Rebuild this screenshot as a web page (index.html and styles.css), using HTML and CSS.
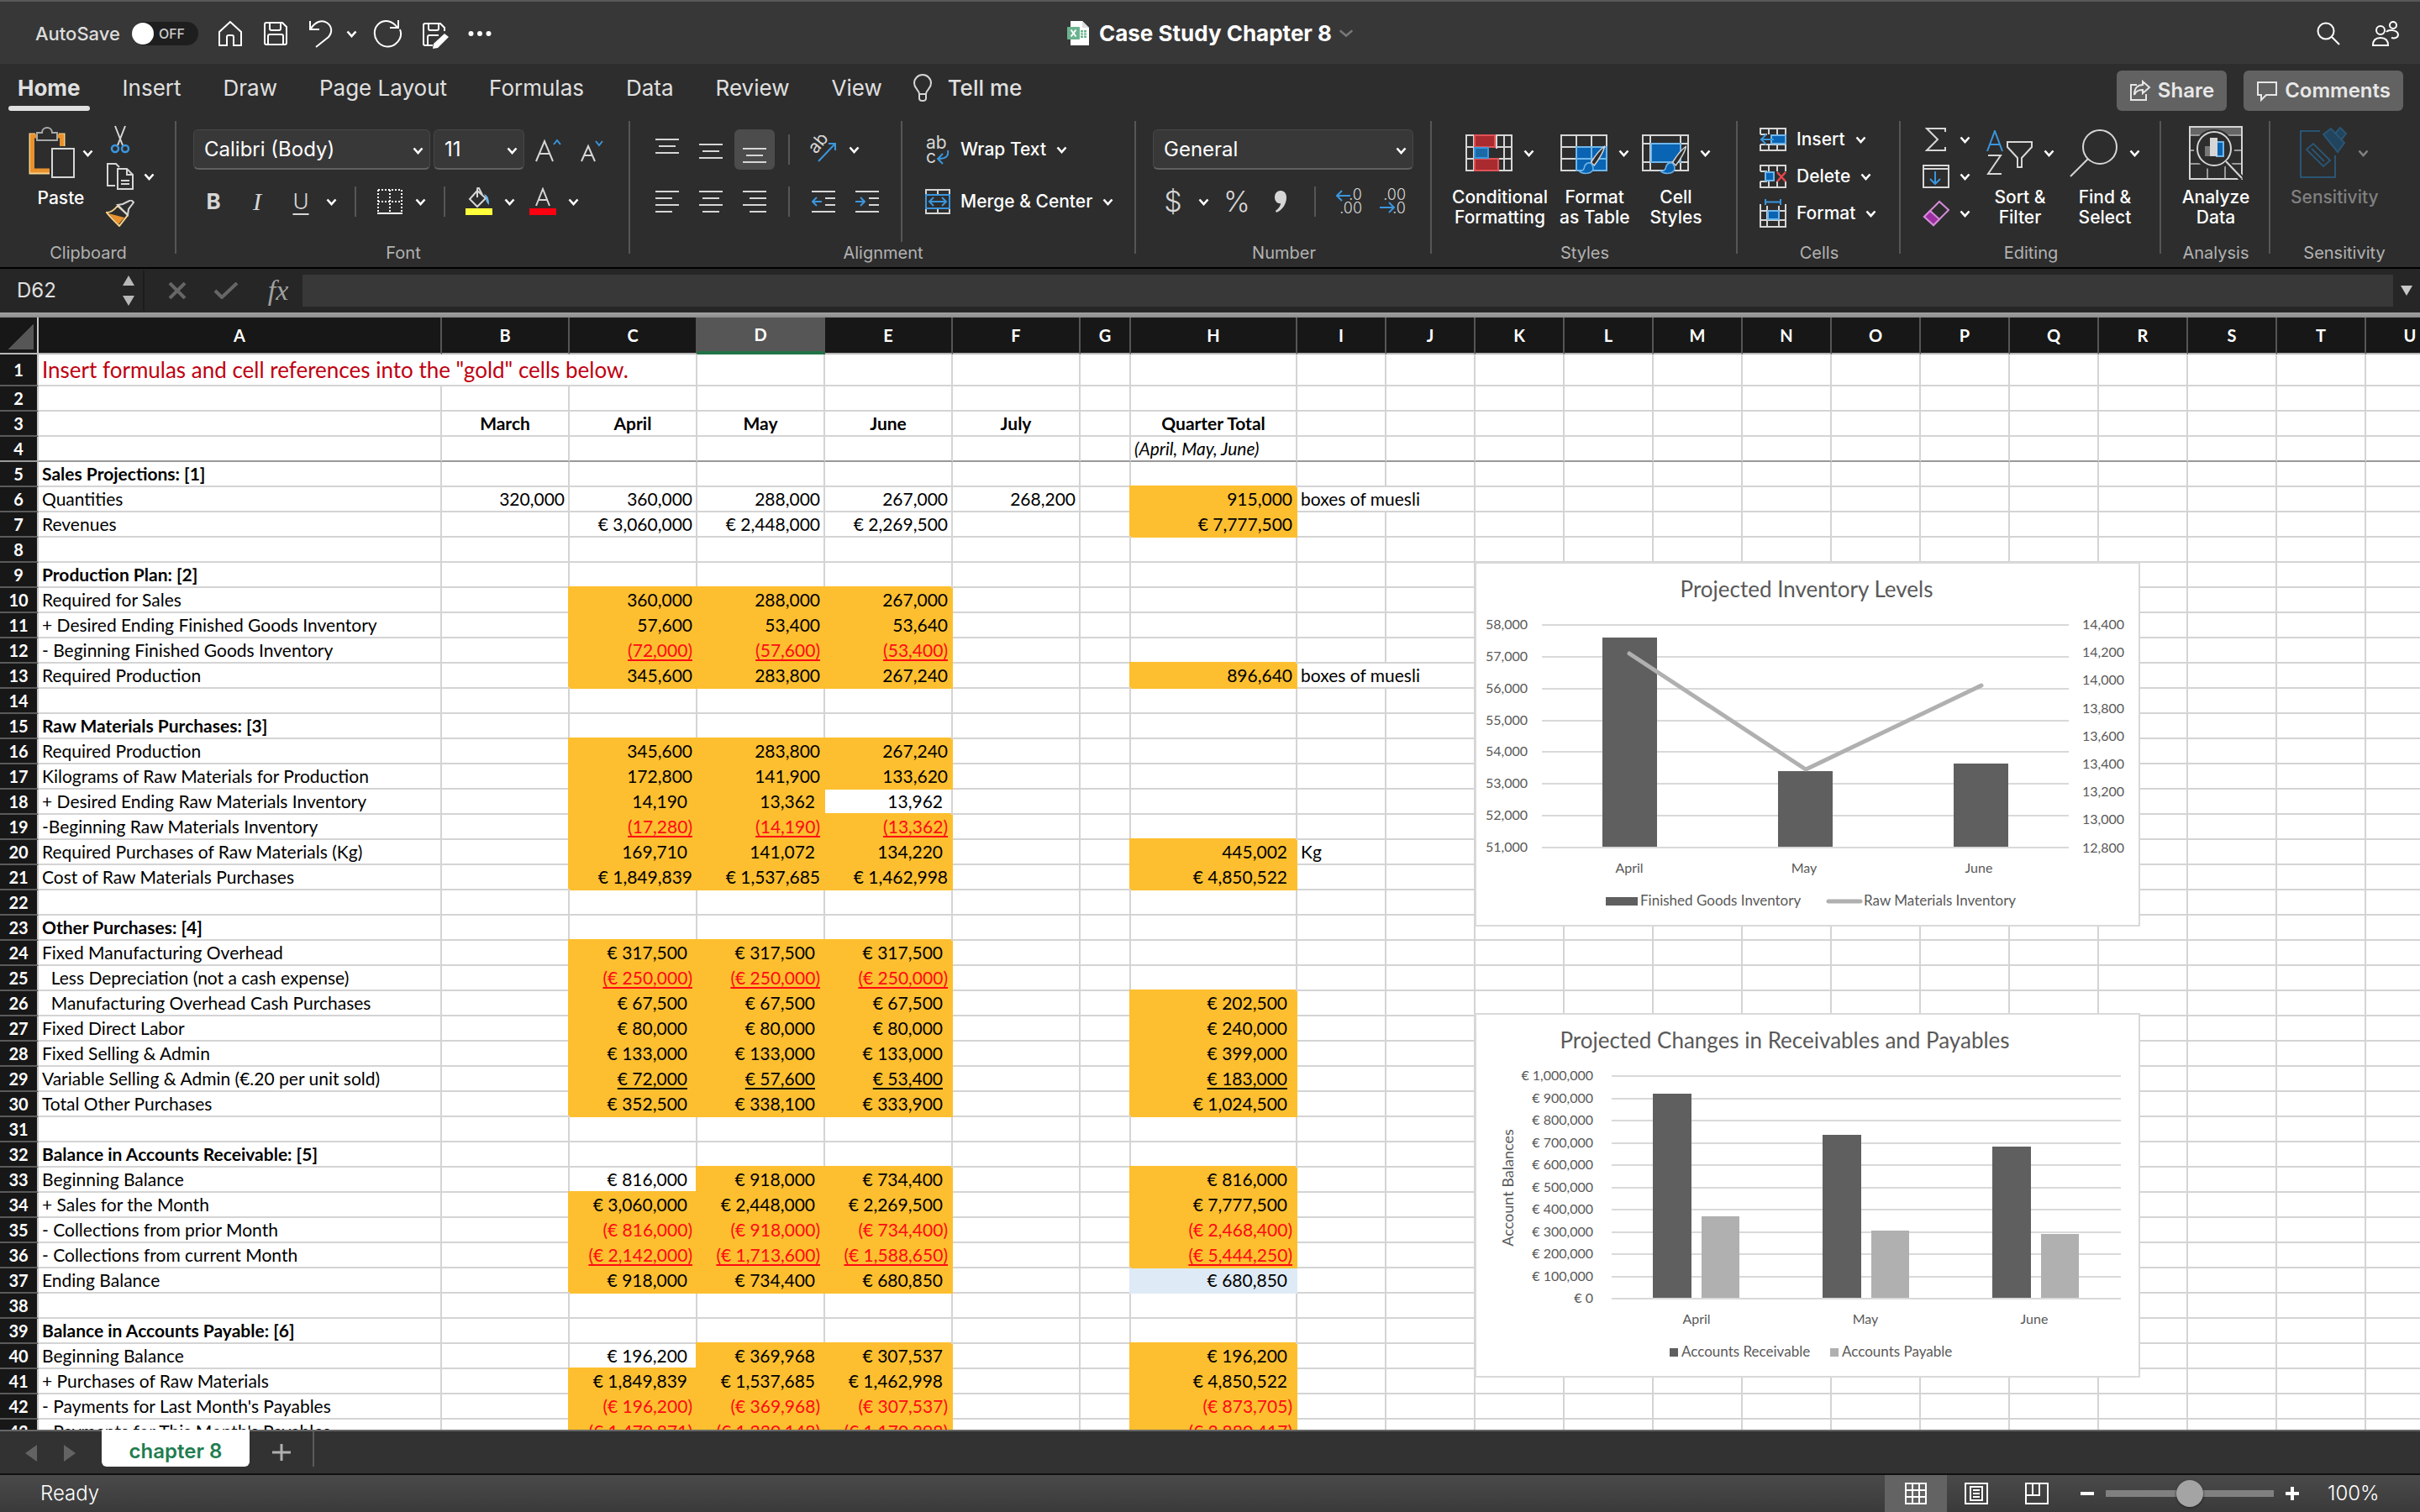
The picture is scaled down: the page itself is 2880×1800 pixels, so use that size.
FILE: index.html
```html
<!DOCTYPE html>
<html lang="en">
<head>
<meta charset="utf-8">
<title>Case Study Chapter 8</title>
<link rel="stylesheet" href="styles.css">
</head>
<body>
<svg class="defs" aria-hidden="true">
  <symbol id="chev" viewBox="0 0 13 9"><path d="M1.5 1.5 6.5 7 11.5 1.5" fill="none" stroke="currentColor" stroke-width="2.6"/></symbol>
  <symbol id="brush" viewBox="0 0 44 56"><path d="M41 2c-6 4-16 17-21 25l5 5C31 25 41 8 41 2z" fill="#2d2d2d" stroke="#d6d6d6" stroke-width="2"/><path d="M19 28c-6-1-9 3-10 8-1 4-4 5-8 5 5 5 19 5 22-2 1-4-1-9-4-11z" fill="#0a64b4" stroke="#6fb6ea" stroke-width="2"/></symbol>
</svg>

<header class="titlebar">
  <div class="quick">
    <label class="autosave">AutoSave <span class="switch"><input type="checkbox" role="switch"><span>OFF</span></span></label>
    <button class="q" aria-label="Home"><svg width="32" height="34" viewBox="0 0 32 34"><path d="M16 3 3 15v16h9V21q0-2 2-2h4q2 0 2 2v10h9V15z" class="w"/></svg></button>
    <button class="q" aria-label="Save"><svg width="32" height="34" viewBox="0 0 32 34"><path d="M5 4h19l5 5v19q0 2-2 2H5q-2 0-2-2V6q0-2 2-2zM9 4v7q0 2 2 2h9q2 0 2-2V4M7 30V20q0-2 2-2h14q2 0 2 2v10" class="w"/></svg></button>
    <button class="q undo" aria-label="Undo"><svg width="32" height="36" viewBox="0 0 32 36"><path d="M3 3v10h11M4 12C9 4 17 1 23 5s7 11 2 17L10 34" class="w"/></svg></button>
    <button class="qc" aria-label="Undo list"><svg class="chev"><use href="#chev"/></svg></button>
    <button class="q" aria-label="Redo"><svg width="36" height="36" viewBox="0 0 36 36"><path d="M31 2v9H21M30 11C24 2 14 1 8 6S1 20 6 27s15 9 22 3 7-12 5-17" class="w"/></svg></button>
    <button class="q edit" aria-label="Save as"><svg width="34" height="36" viewBox="0 0 34 36"><path d="M14 32H5q-2 0-2-2V8q0-2 2-2h18l5 5v4M9 6v6q0 2 2 2h8q2 0 2-2V6M8 31V22q0-2 2-2h11" class="w"/><path d="M28 18l5 4-13 13-6 1 1-6z" fill="#fff"/></svg></button>
    <button class="q" aria-label="More"><svg width="28" height="8" viewBox="0 0 28 8"><g fill="#fff"><circle cx="3.500" cy="4" r="3"/><circle cx="14" cy="4" r="3"/><circle cx="24.500" cy="4" r="3"/></g></svg></button>
  </div>
  <h1 class="doc"><svg width="27" height="30" viewBox="0 0 27 30"><path d="M4 0h14l8 8v21H4z" fill="#fff"/><path d="M18 0v8h8z" fill="#ddd"/><path d="M16 11h7v9h-7z" fill="#6bb38f"/><path d="M19.500 11v9M16 14h7M16 17h7" stroke="#fff"/><rect y="7" width="15" height="15" rx="1" fill="#6bb38f"/><path d="M4.500 10.500l6 8M10.500 10.500l-6 8" stroke="#fff" stroke-width="2"/></svg>
    Case Study Chapter 8 <svg class="dim" width="16" height="10" viewBox="0 0 16 10"><path d="M1.500 2 8 7.500 14.500 2" fill="none" stroke="#777" stroke-width="2.600" stroke-linecap="round"/></svg></h1>
  <div class="tools">
    <button aria-label="Search"><svg width="30" height="30" viewBox="0 0 30 30"><circle cx="12" cy="12" r="9.500" class="w"/><path d="M19 19l9 9" class="w"/></svg></button>
    <button aria-label="Sharing"><svg width="34" height="34" viewBox="0 0 34 34"><circle cx="11" cy="13" r="5" class="w"/><path d="M2 31c0-6 3-9 9-9s9 3 9 9z" class="w"/><circle cx="26" cy="7" r="4" class="w"/><path d="M18 15c2-3 13-3 14 3 0 4-4 5-8 4" class="w"/></svg></button>
  </div>
</header>

<nav class="tabs">
  <a href="#home" class="on">Home</a><a href="#insert">Insert</a><a href="#draw">Draw</a><a href="#layout">Page Layout</a><a href="#formulas">Formulas</a><a href="#data">Data</a><a href="#review">Review</a><a href="#view">View</a>
  <a href="#tell" class="tell"><svg width="24" height="34" viewBox="0 0 24 34"><path d="M8 24c0-5-6-6-6-13a10 10 0 0 1 20 0c0 7-6 8-6 13zM8 24v5q0 3 4 3t4-3v-5" fill="none" stroke="#d6d6d6" stroke-width="2"/></svg>Tell me</a>
  <div class="actions">
    <button><svg width="26" height="26" viewBox="0 0 26 26"><path d="M9 6H2v18h18v-7M16 2l8 7-8 7v-4c-5 0-8 1-10 6 0-8 4-12 10-12z" fill="none" stroke="#e6e6e6" stroke-width="2"/></svg>Share</button>
    <button><svg width="26" height="26" viewBox="0 0 26 26"><path d="M2 3h22v15H12l-6 6v-6H2z" fill="none" stroke="#e6e6e6" stroke-width="2"/></svg>Comments</button>
  </div>
</nav>

<section class="ribbon">
  <div class="group g-clip"><div class="body">
    <button class="big"><span class="ic"><svg width="56" height="62" viewBox="0 0 56 62"><path d="M8 9H2v46h23M36 9h6v14" fill="none" stroke="#f6d28c" stroke-width="3"/><path d="M9 11H4.500v41H25M35 11h4.500v12" fill="none" stroke="#e8912d" stroke-width="5"/><path d="M10 7h6c0-8 12-8 12 0h6v9H10z" fill="#2d2d2d" stroke="#a8a8a8" stroke-width="2"/><path d="M28 26h26v34H28z" fill="#2d2d2d" stroke="#d6d6d6" stroke-width="2"/></svg><svg class="chev"><use href="#chev"/></svg></span><span>Paste</span></button>
    <div class="stack">
      <button aria-label="Cut"><span class="i32"><svg width="24" height="34" viewBox="0 0 24 34"><path d="M6 1l9 23M18 1L9 24" stroke="#d6d6d6" stroke-width="2"/><circle cx="6" cy="28" r="4" fill="none" stroke="#3a96dd" stroke-width="2.500"/><circle cx="18" cy="28" r="4" fill="none" stroke="#3a96dd" stroke-width="2.500"/></svg></span></button>
      <button aria-label="Copy"><span class="i32"><svg width="34" height="34" viewBox="0 0 34 34"><path d="M11 28H2V2h10l4 4M14 8h11l7 7v17H14zM25 8v7h7M18 22h10M18 26h10" class="g"/></svg></span><svg class="chev"><use href="#chev"/></svg></button>
      <button aria-label="Format painter"><span class="i32"><svg width="34" height="32" viewBox="0 0 34 32"><path d="M14 7l12 11-10 13C9 24 4 19 1 15c5 0 9-3 13-8z" fill="#2d2d2d" stroke="#f6d28c" stroke-width="2"/><path d="M3 16l19 5-7 8z" fill="#e8912d"/><path d="M14 6l6-1 10-5 3 3-6 8-1 7z" fill="#2d2d2d" stroke="#d6d6d6" stroke-width="2"/></svg></span></button>
    </div></div><p>Clipboard</p></div>

  <div class="group g-font"><div class="body rows">
    <div class="row"><span class="combo face"><select aria-label="Font"><option>Calibri (Body)</option></select><svg class="chev"><use href="#chev"/></svg></span><span class="combo size"><select aria-label="Font size"><option>11</option></select><svg class="chev"><use href="#chev"/></svg></span>
      <button class="b" aria-label="Grow font"><svg width="32" height="30" viewBox="0 0 32 30"><path d="M2 29 12 5l10 24M6 20h12" class="g"/><path d="M23 9l4-5 4 5" class="bl"/></svg></button>
      <button class="b" aria-label="Shrink font"><svg width="28" height="30" viewBox="0 0 28 30"><path d="M2 29 10 11l8 18M5 22h10" class="g"/><path d="M19 5l4 5 4-5" class="bl"/></svg></button></div>
    <div class="row"><button class="b bold">B</button><button class="b ital">I</button><span class="pair"><button class="b und">U</button><button class="c" aria-label="Underline styles"><svg class="chev"><use href="#chev"/></svg></button></span><i class="sep"></i>
      <span class="pair"><button class="b" aria-label="Borders"><svg width="30" height="30" viewBox="0 0 30 30"><path d="M1 1h28M1 1v26M29 1v26M15 1v26M1 15h28" fill="none" stroke="#fff" stroke-width="2" stroke-dasharray="2 2"/><path d="M0 29h30" stroke="#fff" stroke-width="2"/></svg></button><button class="c" aria-label="Border styles"><svg class="chev"><use href="#chev"/></svg></button></span><i class="sep"></i>
      <span class="pair"><button class="b" aria-label="Fill colour"><svg width="32" height="34" viewBox="0 0 32 34"><path d="M14 4 5 14l9 9 10-10zM14 12V2q0-2 2-1l4 8" class="g"/><path d="M22 8q6 1 6 13-4-3-4-9z" fill="#6fb6ea"/><path d="M0 25h32v8H0z" fill="#ffff3c"/></svg></button><button class="c" aria-label="Fill colours"><svg class="chev"><use href="#chev"/></svg></button></span>
      <span class="pair"><button class="b" aria-label="Font colour"><svg width="32" height="34" viewBox="0 0 32 34"><path d="M8 22 16 2l8 20M11 15h10" class="g"/><path d="M0 25h32v8H0z" fill="#fe0010"/></svg></button><button class="c" aria-label="Font colours"><svg class="chev"><use href="#chev"/></svg></button></span></div>
  </div><p>Font</p></div>

  <div class="group g-align"><div class="body"><div class="rows">
    <div class="row"><button class="b" aria-label="Top align"><svg width="28" height="30" viewBox="0 0 28 30"><path d="M0 3h28M4 11h20M0 19h28" class="g"/></svg></button><button class="b" aria-label="Middle align"><svg width="28" height="30" viewBox="0 0 28 30"><path d="M0 9h28M4 17h20M0 25h28" class="g"/></svg></button><button class="b pressed" aria-label="Bottom align"><svg width="28" height="32" viewBox="0 0 28 32"><path d="M0 15h28M4 23h20M0 31h28" class="g"/></svg></button><i class="sep"></i>
      <span class="pair"><button class="b" aria-label="Orientation"><svg width="34" height="34" viewBox="0 0 34 34"><text x="0" y="0" transform="translate(8 23) rotate(-50)" class="ab">ab</text><path d="M11 31 30 11M23 10h8v8" class="bl"/></svg></button><button class="c" aria-label="Orientations"><svg class="chev"><use href="#chev"/></svg></button></span></div>
    <div class="row"><button class="b" aria-label="Align left"><svg width="28" height="28" viewBox="0 0 28 28"><path d="M0 2h28M0 10h20M0 18h28M0 26h20" class="g"/></svg></button><button class="b" aria-label="Centre"><svg width="28" height="28" viewBox="0 0 28 28"><path d="M0 2h28M4 10h20M0 18h28M4 26h20" class="g"/></svg></button><button class="b" aria-label="Align right"><svg width="28" height="28" viewBox="0 0 28 28"><path d="M0 2h28M8 10h20M0 18h28M8 26h20" class="g"/></svg></button><i class="sep"></i>
      <button class="b" aria-label="Decrease indent"><svg width="28" height="28" viewBox="0 0 28 28"><path d="M0 2h28M16 10h12M16 18h12M0 26h28" class="g"/><path d="M12 14H1M6 9l-5 5 5 5" class="bl"/></svg></button><button class="b" aria-label="Increase indent"><svg width="28" height="28" viewBox="0 0 28 28"><path d="M0 2h28M16 10h12M16 18h12M0 26h28" class="g"/><path d="M0 14h11M6 9l5 5-5 5" class="bl"/></svg></button></div></div>
    <i class="divider"></i>
    <div class="rows">
      <button class="wide"><span class="i48"><svg width="30" height="36" viewBox="0 0 30 36"><text x="1" y="17" class="ab">ab</text><text x="1" y="34" class="ab">c</text><path d="M27 19q2 10-11 10M21 23l-6 6 6 6" class="bl"/></svg></span>Wrap Text<svg class="chev"><use href="#chev"/></svg></button>
      <button class="wide"><span class="i48"><svg width="30" height="30" viewBox="0 0 30 30"><path d="M1 6V1h28v5M1 24v5h28v-5M15 1v5M15 24v5" class="g"/><path d="M1 7h28v16H1zM5 15h20M10 10l-5 5 5 5M20 10l5 5-5 5" class="bl"/></svg></span>Merge &amp; Center<svg class="chev"><use href="#chev"/></svg></button>
    </div></div><p>Alignment</p></div>

  <div class="group g-num"><div class="body rows">
    <div class="row"><span class="combo fmt"><select aria-label="Number format"><option>General</option></select><svg class="chev"><use href="#chev"/></svg></span></div>
    <div class="row"><span class="pair"><button class="b glyph">$</button><button class="c" aria-label="Currencies"><svg class="chev"><use href="#chev"/></svg></button></span><button class="b glyph">%</button><button class="b" aria-label="Comma style"><svg width="16" height="28" viewBox="0 0 16 28"><path d="M8 1c5 0 7 4 7 8 0 8-5 15-12 18l-1-2c4-3 6-6 6-9-4 1-7-3-7-7 0-5 3-8 7-8z" fill="#d6d6d6"/></svg></button><i class="sep"></i>
      <button class="b" aria-label="Increase decimal"><svg width="32" height="34" viewBox="0 0 32 34"><text x="31" y="15" text-anchor="end" class="dec">.0</text><text x="31" y="31" text-anchor="end" class="dec">.00</text><path d="M17 10H1M7 4l-6 6 6 6" class="bl"/></svg></button><button class="b" aria-label="Decrease decimal"><svg width="32" height="34" viewBox="0 0 32 34"><text x="31" y="15" text-anchor="end" class="dec">.00</text><text x="31" y="31" text-anchor="end" class="dec">.0</text><path d="M0 24h17M11 18l6 6-6 6" class="bl"/></svg></button></div>
  </div><p>Number</p></div>

  <div class="group g-style"><div class="body">
    <button class="big"><span class="ic"><svg width="56" height="44" viewBox="0 0 56 44"><path d="M1 1h54v42H1zM1 15h54M1 29h54M10 1v42M46 1v42M37 1v42" class="g"/><path d="M11 1h24v14H11zM11 29h28v14H11z" fill="#a92b2f" stroke="#e05357" stroke-width="2"/><path d="M11 16h16v12H11z" fill="#1b6aa8" stroke="#3a96dd" stroke-width="2"/><path d="M28 17h17v11H28z" fill="#2d2d2d"/></svg><svg class="chev"><use href="#chev"/></svg></span><span>Conditional<br>Formatting</span></button>
    <button class="big"><span class="ic"><svg width="56" height="44" viewBox="0 0 56 44" overflow="visible"><path d="M1 1h54v42H1zM1 15h54M1 29h54M19 1v42M37 1v42" class="g"/><path d="M19 15h36v28H19z" fill="#0a64b4" stroke="#6fb6ea" stroke-width="2"/><path d="M37 15v28M19 29h36" stroke="#6fb6ea" stroke-width="2"/><use href="#brush" x="15" y="13" width="46" height="42"/></svg><svg class="chev"><use href="#chev"/></svg></span><span>Format<br>as Table</span></button>
    <button class="big"><span class="ic"><svg width="56" height="44" viewBox="0 0 56 44" overflow="visible"><path d="M1 1h54v42H1zM1 11h54M1 33h54M10 1v42M46 1v42" class="g"/><path d="M11 11h35v22H11z" fill="#0a64b4" stroke="#6fb6ea" stroke-width="2"/><use href="#brush" x="15" y="13" width="46" height="42"/></svg><svg class="chev"><use href="#chev"/></svg></span><span>Cell<br>Styles</span></button>
  </div><p>Styles</p></div>

  <div class="group g-cells"><div class="body"><div class="stack">
    <button><span class="i32"><svg width="32" height="28" viewBox="0 0 32 28"><path d="M1 8V1h30v26H1v-7M11 1v7M21 1v26M11 20v7M1 8h8M1 20h30" class="g"/><path d="M14 9h17v10H14z" fill="#0a64b4" stroke="#6fb6ea" stroke-width="2"/><path d="M17 14H1M8 8l-6 6 6 6" class="bl"/></svg></span>Insert<svg class="chev"><use href="#chev"/></svg></button>
    <button><span class="i32"><svg width="32" height="28" viewBox="0 0 32 28"><path d="M1 8V1h30v7M1 20v7h30v-7M11 1v7M21 1v7M11 20v7M21 20v7M1 8h8M1 20h8" class="g"/><path d="M7 9h10v10H7z" fill="#0a64b4" stroke="#6fb6ea" stroke-width="2"/><path d="M21 9l10 11M31 9 21 20" stroke="#e8474c" stroke-width="2.500"/></svg></span>Delete<svg class="chev"><use href="#chev"/></svg></button>
    <button><span class="i32"><svg width="32" height="34" viewBox="0 0 32 34"><path d="M1 6v27h30V6M1 14h30M1 25h30M9 8v25M23 8v25" class="g"/><path d="M10 14h13v10H10z" fill="#0a64b4" stroke="#6fb6ea" stroke-width="2"/><path d="M7 0v7M25 0v7M7 3.500h18" class="bl"/></svg></span>Format<svg class="chev"><use href="#chev"/></svg></button>
  </div></div><p>Cells</p></div>

  <div class="group g-edit"><div class="body">
    <div class="stack">
      <button aria-label="AutoSum"><span class="i32"><svg width="26" height="28" viewBox="0 0 26 28"><path d="M24 5V1H2l13 13L2 27h22v-4" class="g"/></svg></span><svg class="chev"><use href="#chev"/></svg></button>
      <button aria-label="Fill"><span class="i32"><svg width="32" height="28" viewBox="0 0 32 28"><path d="M1 1h30v26H1zM1 5h30" class="g"/><path d="M15 8v15M9 17l6 6 6-6" class="bl"/></svg></span><svg class="chev"><use href="#chev"/></svg></button>
      <button aria-label="Clear"><span class="i32"><svg width="32" height="32" viewBox="0 0 32 32"><path d="M2 20 20 2l11 10-18 18z" fill="none" stroke="#d58ad8" stroke-width="2"/><path d="M2 20l7-7 11 10-7 7z" fill="#9b2fa0" stroke="#d58ad8" stroke-width="2"/></svg></span><svg class="chev"><use href="#chev"/></svg></button>
    </div>
    <button class="big"><span class="ic"><svg width="56" height="54" viewBox="0 0 56 54"><path d="M2 25 11 1l9 24M5 17h12" class="bl"/><path d="M3 30h15L3 52h16" class="g"/><path d="M26 14h29v6L43 33v11h-5V33L26 20z" class="g"/></svg><svg class="chev"><use href="#chev"/></svg></span><span>Sort &amp;<br>Filter</span></button>
    <button class="big"><span class="ic"><svg width="58" height="60" viewBox="0 0 58 60"><circle cx="36" cy="23" r="20" class="g"/><path d="M22 37 1 58" class="g"/></svg><svg class="chev"><use href="#chev"/></svg></span><span>Find &amp;<br>Select</span></button>
  </div><p>Editing</p></div>

  <div class="group g-anal"><div class="body">
    <button class="big"><span class="ic"><svg width="64" height="64" viewBox="0 0 64 64"><path d="M1 1h62v10H1z" fill="#666"/><path d="M1 29h62M1 45h62M22 45v18M43 45v18M1 11h62" fill="none" stroke="#999" stroke-width="2"/><path d="M1 1h62v62H1z" class="g"/><circle cx="30" cy="28" r="24" fill="#2d2d2d"/><path d="M19 24h8v12h-8z" fill="#777"/><path d="M33 19h8v17h-8z" fill="#0a64b4" stroke="#6fb6ea" stroke-width="2"/><path d="M25 14h9v22h-9z" fill="#d6d6d6"/><circle cx="30" cy="27" r="20" class="g"/><path d="M44 42l19 21" stroke="#2d2d2d" stroke-width="7"/><path d="M44 42l19 20" class="g"/></svg></span><span>Analyze<br>Data</span></button>
  </div><p>Analysis</p></div>

  <div class="group g-sens"><div class="body">
    <button class="big" disabled><span class="ic"><svg width="56" height="62" viewBox="0 0 56 62"><g fill="none" stroke="#2b5573" stroke-width="2"><path d="M24 5H1v55h41V34"/><path d="M8 27l8-7 20 20-8 7zM14 26l15 15"/><path d="M42 8l6-7 7 7-6 8M28 9l9-7 16 17-8 11z" fill="#22455f"/></g></svg><svg class="chev"><use href="#chev"/></svg></span><span>Sensitivity</span></button>
  </div><p>Sensitivity</p></div>
</section>

<div class="formula">
  <div class="name"><input aria-label="Name box" value="D62"><span class="step"><svg width="14" height="36" viewBox="0 0 14 36"><path d="M7 0l7 12H0zM7 36l7-12H0z" fill="#b8b8b8"/></svg></span></div>
  <button class="x" aria-label="Cancel"><svg width="22" height="20" viewBox="0 0 22 20"><path d="M2 1l18 18M20 1 2 19" stroke="#666" stroke-width="4"/></svg></button>
  <button class="ok" aria-label="Enter"><svg width="30" height="20" viewBox="0 0 30 20"><path d="M2 10l8 8L28 1" fill="none" stroke="#666" stroke-width="4"/></svg></button>
  <button class="fx" aria-label="Insert function">fx</button>
  <input class="entry" aria-label="Formula">
  <button class="drop" aria-label="Expand"><svg width="14" height="12" viewBox="0 0 14 12"><path d="M0 0h14L7 12z" fill="#c8c8c8"/></svg></button>
</div>

<main class="sheet">
  <table id="grid"></table>
  <figure class="chart inventory">
    <svg viewBox="0 0 792 434" role="img" aria-label="Projected Inventory Levels" id="inv"></svg>
  </figure>
  <figure class="chart balances">
    <svg viewBox="0 0 792 434" role="img" aria-label="Projected Changes in Receivables and Payables" id="bal"></svg>
  </figure>
</main>

<div class="sheets">
  <button aria-label="Previous sheet"><svg width="14" height="20" viewBox="0 0 14 20"><path d="M14 0v20L0 10z" fill="#636363"/></svg></button>
  <button aria-label="Next sheet"><svg width="14" height="20" viewBox="0 0 14 20"><path d="M0 0v20l14-10z" fill="#636363"/></svg></button>
  <a class="tab" href="#chapter8">chapter 8</a>
  <button class="add" aria-label="New sheet"><svg width="22" height="20" viewBox="0 0 22 20"><path d="M11 0v20M0 10h22" stroke="#b0b0b0" stroke-width="3"/></svg></button>
</div>

<footer class="status">
  <span class="ready">Ready</span>
  <button class="view on" aria-label="Normal view"><svg width="26" height="26" viewBox="0 0 26 26"><path d="M1 1h24v24H1zM9 1v24M17 1v24M1 9h24M1 17h24" class="w"/></svg></button>
  <button class="view" aria-label="Page layout"><svg width="28" height="26" viewBox="0 0 28 26"><path d="M1 1h26v24H1zM7 5h14v16H7zM10 9h8M10 13h8M10 17h8" class="w"/></svg></button>
  <button class="view" aria-label="Page break"><svg width="28" height="26" viewBox="0 0 28 26"><path d="M1 1h26v24H1zM9 1v14M17 1v14H1" class="w"/></svg></button>
  <button class="zm" aria-label="Zoom out"><svg width="16" height="16" viewBox="0 0 16 16"><path d="M0 8h16" stroke="#fff" stroke-width="4"/></svg></button>
  <input type="range" min="0" max="100" value="50" aria-label="Zoom">
  <button class="zm" aria-label="Zoom in"><svg width="16" height="16" viewBox="0 0 16 16"><path d="M0 8h16M8 0v16" stroke="#fff" stroke-width="4"/></svg></button>
  <span class="pct">100%</span>
</footer>
<script src="grid.js"></script>
</body>
</html>
```
FILE: styles.css
```css
* { box-sizing: border-box; }
html, body { height: 100%; }
body { margin: 0; display: flex; flex-direction: column; overflow: hidden; background: #2d2d2d; color: #fff; font: 22px/24px Inter, "Liberation Sans", sans-serif; }
button { appearance: none; border: 0; padding: 0; margin: 0; background: none; color: inherit; font: inherit; display: flex; align-items: center; justify-content: center; white-space: nowrap; }
a { color: inherit; text-decoration: none; }
p { margin: 0; }
svg { display: block; flex: none; }
.defs { position: absolute; width: 0; height: 0; }
.chev { width: 13px; height: 9px; }
.w { fill: none; stroke: #fff; stroke-width: 2; }
.g { fill: none; stroke: #d6d6d6; stroke-width: 2; }
.bl { fill: none; stroke: #3a96dd; stroke-width: 2; }

/* title bar */
.titlebar { flex: none; height: 76px; display: grid; grid-template-columns: 1fr auto 1fr; align-items: center; background: #373737; border-top: 2px solid #595959; padding: 2px 42px 0; }
.quick { display: flex; align-items: center; gap: 22px; }
.autosave { display: flex; align-items: center; gap: 14px; color: #ddd; font-size: 22px; font-weight: 500; }
.switch { display: flex; align-items: center; width: 79px; height: 28px; border-radius: 14px; background: #1e1e1e; }
.switch input { appearance: none; margin: 0 6px 0 0; width: 26px; height: 26px; border-radius: 13px; background: #fff; }
.switch span { font-size: 16px; color: #ccc; }
.undo { margin-right: -8px; }
.qc { margin-right: -4px; }
.doc { margin: 0; display: flex; align-items: center; gap: 11px; font-size: 26px; line-height: 32px; font-weight: 700; }
.dim { margin-left: -2px; }
.tools { display: flex; justify-content: flex-end; gap: 36px; margin-right: -18px; }

/* ribbon tabs */
.tabs { flex: none; height: 68px; display: flex; align-items: flex-start; gap: 28px; padding: 8px 20px 0 10px; font-size: 26px; line-height: 42px; color: #e0e0e0; }
.tabs a { padding: 0 11px; height: 48px; border-bottom: 6px solid transparent; }
.tabs a.on { font-weight: 700; position: relative; }
.tabs a.on::after { content: ""; position: absolute; left: 0; right: 0; bottom: -6px; height: 6px; border-radius: 3px; background: #e0e0e0; }
.tabs .tell { display: flex; align-items: center; gap: 18px; font-weight: 500; margin-left: -14px; }
.actions { margin-left: auto; display: flex; gap: 20px; }
.actions button { height: 48px; padding: 0 15px; gap: 8px; border-radius: 6px; background: #626262; color: #e8e8e8; font-size: 24px; font-weight: 600; }

/* ribbon */
.ribbon { flex: none; display: flex; height: 176px; border-bottom: 2px solid #000; font-size: 21px; font-weight: 500; }
.group { flex: none; background: linear-gradient(#565656, #565656) right top / 2px 158px no-repeat; }
.group p { text-align: center; color: #b2b2b2; font-size: 20px; line-height: 26px; font-weight: 400; }
.body { display: flex; height: 144px; }
.rows { display: flex; flex-direction: column; gap: 14px; padding-top: 10px; }
.row { display: flex; align-items: center; gap: 4px; height: 48px; }
.g-clip { width: 210px; padding-left: 34px; }
.g-clip p { margin-left: -34px; }
.g-clip .body { gap: 16px; }
.g-clip .big { gap: 10px; }
.g-clip .ic { gap: 8px; }
.g-font { width: 540px; padding: 0 20px; }
.g-align { width: 602px; padding-left: 20px; }
.g-align p { margin-left: -20px; }
.g-num { width: 352px; padding: 0 20px; }
.g-style { width: 364px; padding: 0 24px; }
.g-style .body { gap: 14px; }
.g-cells { width: 194px; padding: 0 26px; }
.g-edit { width: 310px; padding: 0 26px; }
.g-edit .body { gap: 18px; }
.g-anal { width: 130px; }
.g-anal .body { justify-content: center; }
.g-sens { flex: 1; padding: 0 26px 0 24px; background: none; }
.pair { display: flex; }
.b { width: 48px; height: 48px; border-radius: 6px; color: #d6d6d6; }
.pressed { background: #4c4c4c; }
.c { width: 24px; height: 48px; }
.sep { width: 2px; height: 36px; margin: 0 12px; background: #565656; }
.divider { width: 2px; height: 144px; margin: 0 18px 0 16px; background: #565656; }
.bold { font-size: 26px; font-weight: 700; }
.ital { font: italic 30px "Liberation Serif", serif; }
.und { font-size: 26px; font-weight: 300; text-decoration: underline; text-underline-offset: 5px; text-decoration-thickness: 2px; }
.glyph { font-size: 34px; font-weight: 300; }
.combo { position: relative; height: 48px; }
.combo select { appearance: none; width: 100%; height: 48px; padding: 0 12px; border: 1px solid #474747; border-bottom: 2px solid #606060; border-radius: 6px; background: #383838; color: #fff; font: 24px/28px Inter, sans-serif; }
.combo .chev { position: absolute; right: 8px; top: 21px; }
.face { width: 282px; } .size { width: 108px; } .fmt { width: 310px; }
.ab { font: 21px Inter, sans-serif; fill: #d6d6d6; }
.dec { font: 300 18px Inter, sans-serif; fill: #d6d6d6; }
.wide { height: 48px; justify-content: flex-start; }
.wide .i48 { width: 48px; margin-right: 3px; display: flex; justify-content: center; }
.wide .chev { margin-left: 12px; }
.big { flex-direction: column; justify-content: flex-start; align-self: flex-start; padding-top: 6px; gap: 9px; }
.ic { display: flex; align-items: center; gap: 13px; height: 64px; }
.stack button { height: 44px; justify-content: flex-start; gap: 12px; }
.i32 { width: 32px; display: flex; justify-content: center; }
button:disabled { color: #808080; }

/* formula bar */
.formula { flex: none; height: 58px; display: flex; align-items: center; background: #262626; border-bottom: 6px solid #d8d8d8; border-image: linear-gradient(#9a9a9a, #f4f4f4 50%, #8c8c8c) 6; }
.name { width: 172px; height: 48px; padding: 0 10px 0 20px; display: flex; justify-content: space-between; align-items: center; border-right: 2px solid #1c1c1c; }
.name input { width: 100px; border: 0; padding: 0; background: none; color: #e0e0e0; font: 24px/28px Inter, sans-serif; }
.x { margin-left: 28px; } .ok { margin-left: 32px; }
.fx { margin-left: 30px; width: 34px; font: italic 34px/40px "Liberation Serif", serif; color: #a0a0a0; }
.entry { flex: 1; min-width: 0; margin-left: 12px; height: 38px; border: 0; background: #383838; color: #fff; }
.drop { width: 32px; }

/* worksheet */
.sheet { flex: 1; min-height: 0; position: relative; overflow: hidden; background: #fff; border-bottom: 2px solid #666; }
table { table-layout: fixed; border-collapse: separate; border-spacing: 0; width: 2922px; color: #000; font: 21px/28px Lato, Carlito, sans-serif; }
td, th { padding: 0 4px; height: 30px; border: 0 solid #d4d4d4; border-width: 0 2px 2px 0; white-space: nowrap; text-align: left; font-weight: 400; }
thead th { height: 44px; padding: 0; text-align: center; background: #171717; color: #fff; font-size: 20px; font-weight: 700; border-color: #555; border-bottom-color: #b8b8b8; }
thead th.sel { background: #565656; border-right-color: #565656; border-bottom: 4px solid #217346; }
thead .all { border-right-color: #c8c8c8; background: linear-gradient(135deg, transparent 50%, #565656 50%) 10px 8px / 30px 30px no-repeat #171717; }
tbody th { padding: 0; text-align: center; background: #171717; color: #fff; font-size: 20px; font-weight: 700; border-color: #5a5a5a; border-right-color: #c8c8c8; }
tbody tr.tall td, tbody tr.tall th { height: 38px; line-height: 36px; }
.tall td:nth-child(2) { color: #c00010; font-size: 26px; }
tr.freeze td, tr.freeze th { border-bottom-color: #999; }
td.n { text-align: right; }
td.a { text-align: right; padding-right: 10px; }
td.h { font-weight: 700; text-align: center; }
td.t { font-weight: 700; }
td.i { font-style: italic; }
td.gold { background: #fdbf2f; border-color: #fdbf2f; box-shadow: -2px -2px 0 #fdbf2f; }
td.blue { background: #deebf6; border-color: #deebf6; box-shadow: -2px 0 0 #deebf6; }
td.neg { color: #ff0a14; }
td.u { text-decoration: underline; text-decoration-thickness: 2px; text-underline-offset: 3px; }

/* charts float over the cells */
.chart { position: absolute; left: 1755px; margin: 0; width: 792px; height: 434px; background: #fff; border: 2px solid #d9d9d9; }
.inventory { top: 291px; }
.balances { top: 828px; }
.chart svg { width: 792px; height: 434px; margin: -2px; font-family: Lato, Carlito, sans-serif; }
.chart text { fill: #595959; font-size: 16px; }
.chart .title { font-size: 26px; }
.chart .axis { font-size: 18px; }
.chart .key { font-size: 17px; }
.end { text-anchor: end; } .mid { text-anchor: middle; }
.rule { stroke: #d9d9d9; stroke-width: 2; }
.dark { fill: #5f5f5f; } .light { fill: #b0b0b0; }
.trend { fill: none; stroke: #b0b0b0; stroke-width: 5; stroke-linecap: round; stroke-linejoin: round; }

/* sheet tabs */
.sheets { flex: none; height: 50px; display: flex; align-items: flex-start; background: #323232; padding-left: 30px; }
.sheets button { height: 52px; margin-right: 32px; }
.sheets .tab { height: 44px; margin: -2px 0 0; width: 176px; position: relative; background: #fff; border-radius: 0 0 6px 6px; color: #217d4f; font-size: 24px; font-weight: 600; line-height: 52px; text-align: center; }
.sheets button:nth-child(2) { margin-right: 31px; }
.sheets .add { width: 77px; height: 42px; margin: 0; padding-top: 8px; border-right: 2px solid #5a5a5a; }

/* status bar */
.status { flex: none; height: 46px; display: flex; align-items: center; padding: 0 48px; background: linear-gradient(#4a4a4a, #3a3a3a); border-top: 2px solid #101010; }
.ready { margin-right: auto; font-size: 24px; font-weight: 300; }
.view { width: 74px; height: 44px; margin-right: -2px; }
.view.on { background: #636363; }
.zm { width: 16px; margin: 0 14px; }
.view + .zm { margin-left: 17px; }
.status input { appearance: none; margin: 0; width: 200px; height: 32px; background: linear-gradient(#808080, #808080) 0 12px / 200px 8px no-repeat; border-radius: 4px; }
.status input::-webkit-slider-thumb { appearance: none; width: 32px; height: 32px; border-radius: 16px; background: #a4a4a4; box-shadow: 0 1px 3px #222; }
.pct { width: 62px; margin-left: 20px; font-size: 24px; font-weight: 300; }
```
FILE: grid.js
```js
// Worksheet contents: one line per row, columns A to J separated by "|".
// Flags before ":" — g gold, b blue, n number, a accounting, r negative, u underline, h heading, t title, i italic.
const rows = `
Insert formulas and cell references into the "gold" cells below.

|h:March|h:April|h:May|h:June|h:July||h:Quarter Total
|||||||i:(April, May, June)
t:Sales Projections: [1]
Quantities|n:320,000|n:360,000|n:288,000|n:267,000|n:268,200||gn:915,000|boxes of muesli
Revenues||n:€ 3,060,000|n:€ 2,448,000|n:€ 2,269,500|||gn:€ 7,777,500

t:Production Plan: [2]
Required for Sales||gn:360,000|gn:288,000|gn:267,000
+ Desired Ending Finished Goods Inventory||gn:57,600|gn:53,400|gn:53,640
- Beginning Finished Goods Inventory||gnru:(72,000)|gnru:(57,600)|gnru:(53,400)
Required Production||gn:345,600|gn:283,800|gn:267,240|||gn:896,640|boxes of muesli

t:Raw Materials Purchases: [3]
Required Production||gn:345,600|gn:283,800|gn:267,240
Kilograms of Raw Materials for Production||gn:172,800|gn:141,900|gn:133,620
+ Desired Ending Raw Materials Inventory||ga:14,190|ga:13,362|a:13,962
-Beginning Raw Materials Inventory||gnru:(17,280)|gnru:(14,190)|gnru:(13,362)
Required Purchases of Raw Materials (Kg)||ga:169,710|ga:141,072|ga:134,220|||ga:445,002|Kg
Cost of Raw Materials Purchases||gn:€ 1,849,839|gn:€ 1,537,685|gn:€ 1,462,998|||ga:€ 4,850,522

t:Other Purchases: [4]
Fixed Manufacturing Overhead||ga:€ 317,500|ga:€ 317,500|ga:€ 317,500
  Less Depreciation (not a cash expense)||gnru:(€ 250,000)|gnru:(€ 250,000)|gnru:(€ 250,000)
  Manufacturing Overhead Cash Purchases||ga:€ 67,500|ga:€ 67,500|ga:€ 67,500|||ga:€ 202,500
Fixed Direct Labor||ga:€ 80,000|ga:€ 80,000|ga:€ 80,000|||ga:€ 240,000
Fixed Selling & Admin||ga:€ 133,000|ga:€ 133,000|ga:€ 133,000|||ga:€ 399,000
Variable Selling & Admin (€.20 per unit sold)||gau:€ 72,000|gau:€ 57,600|gau:€ 53,400|||gau:€ 183,000
Total Other Purchases||ga:€ 352,500|ga:€ 338,100|ga:€ 333,900|||ga:€ 1,024,500

t:Balance in Accounts Receivable: [5]
Beginning Balance||a:€ 816,000|ga:€ 918,000|ga:€ 734,400|||ga:€ 816,000
+ Sales for the Month||ga:€ 3,060,000|ga:€ 2,448,000|ga:€ 2,269,500|||ga:€ 7,777,500
- Collections from prior Month||gnr:(€ 816,000)|gnr:(€ 918,000)|gnr:(€ 734,400)|||gnr:(€ 2,468,400)
- Collections from current Month||gnru:(€ 2,142,000)|gnru:(€ 1,713,600)|gnru:(€ 1,588,650)|||gnru:(€ 5,444,250)
Ending Balance||ga:€ 918,000|ga:€ 734,400|ga:€ 680,850|||ba:€ 680,850

t:Balance in Accounts Payable: [6]
Beginning Balance||a:€ 196,200|ga:€ 369,968|ga:€ 307,537|||ga:€ 196,200
+ Purchases of Raw Materials||ga:€ 1,849,839|ga:€ 1,537,685|ga:€ 1,462,998|||ga:€ 4,850,522
- Payments for Last Month's Payables||gnr:(€ 196,200)|gnr:(€ 369,968)|gnr:(€ 307,537)|||gnr:(€ 873,705)
- Payments for This Month's Payables||gnru:(€ 1,479,871)|gnru:(€ 1,230,148)|gnru:(€ 1,170,398)|||gnru:(€ 3,880,417)`.slice(1).split('\n');

const names = { g: 'gold', b: 'blue', n: 'n', a: 'a', r: 'neg', u: 'u', h: 'h', t: 't', i: 'i' };
const letters = 'ABCDEFGHIJKLMNOPQRSTU'.split('');
const widths = [480, 152, 152, 152, 152, 152, 60, 198];
const esc = s => s.replace(/&/g, '&amp;').replace(/^ +/, m => '&nbsp;'.repeat(m.length));

let html = '<colgroup><col style="width:46px">' + letters.map((_, i) => `<col style="width:${widths[i] || 106}px">`).join('') + '</colgroup>';
html += '<thead><tr><th class="all"></th>' + letters.map(l => `<th scope="col"${l === 'D' ? ' class="sel"' : ''}>${l}</th>`).join('') + '</tr></thead><tbody>';
rows.forEach((line, r) => {
  const cells = line.split('|');
  html += `<tr class="${r === 0 ? 'tall' : r === 3 ? 'freeze' : ''}"><th scope="row">${r + 1}</th>`;
  for (let c = 0; c < letters.length; c++) {
    let text = cells[c] || '', cls = '';
    const m = /^([a-z]{1,4}):(.*)$/.exec(text);
    if (m) { cls = [...m[1]].map(k => names[k]).join(' '); text = m[2]; }
    const span = r === 0 && c === 0 ? 3 : /^boxes/.test(text) ? 2 : 1;
    html += `<td${cls ? ` class="${cls}"` : ''}${span > 1 ? ` colspan="${span}"` : ''}>${esc(text)}</td>`;
    c += span - 1;
  }
  html += '</tr>';
});
document.getElementById('grid').innerHTML = html + '</tbody>';

const text = (x, y, s, cls = '') => `<text x="${x}" y="${y}" class="${cls}">${s}</text>`;
const rule = (x1, x2, y) => `<path class="rule" d="M${x1} ${y}H${x2}"/>`;
const bar = (x, y, w, base, cls) => `<rect class="${cls}" x="${x}" y="${y}" width="${w}" height="${base - y}"/>`;
const months = ['April', 'May', 'June'];

let inv = text(395, 42, 'Projected Inventory Levels', 'title mid');
for (let i = 0; i < 8; i++) {
  const y = 75 + Math.round(i * 37.86);
  inv += rule(80, 707, y) + text(63, y + 5, 58 - i + ',000', 'end');
}
for (let i = 0; i < 9; i++) inv += text(723, 80 + Math.round(i * 33.2), (14400 - i * 200).toLocaleString('en-US'));
[90, 249, 240].forEach((y, i) => { inv += bar(152 + i * 209, y, 65, 339, 'dark') + text(184 + i * 208, 370, months[i], 'mid'); });
inv += '<path class="trend" d="M184 109 394 247 603 147"/>';
inv += '<rect class="dark" x="156" y="399" width="38" height="10"/>' + text(197, 409, 'Finished Goods Inventory', 'key');
inv += '<path class="trend" d="M421 404h38"/>' + text(463, 409, 'Raw Materials Inventory', 'key');
document.getElementById('inv').innerHTML = inv;

let bal = text(369, 42, 'Projected Changes in Receivables and Payables', 'title mid');
for (let i = 0; i < 11; i++) {
  const y = 75 + Math.round(i * 26.5);
  bal += rule(163, 769, y) + text(141, y + 5, '€ ' + (1000000 - i * 100000).toLocaleString('en-US'), 'end');
}
[[96, 242], [145, 259], [159, 263]].forEach(([a, b], i) => {
  bal += bar(212 + i * 202, a, 46, 339, 'dark') + bar(270 + i * 202, b, 45, 339, 'light') + text(264 + i * 201, 370, months[i], 'mid');
});
bal += '<text class="axis mid" transform="translate(46 208) rotate(-90)">Account Balances</text>';
bal += '<rect class="dark" x="232" y="399" width="10" height="10"/>' + text(246, 409, 'Accounts Receivable', 'key');
bal += '<rect class="light" x="423" y="399" width="10" height="10"/>' + text(437, 409, 'Accounts Payable', 'key');
document.getElementById('bal').innerHTML = bal;
```
